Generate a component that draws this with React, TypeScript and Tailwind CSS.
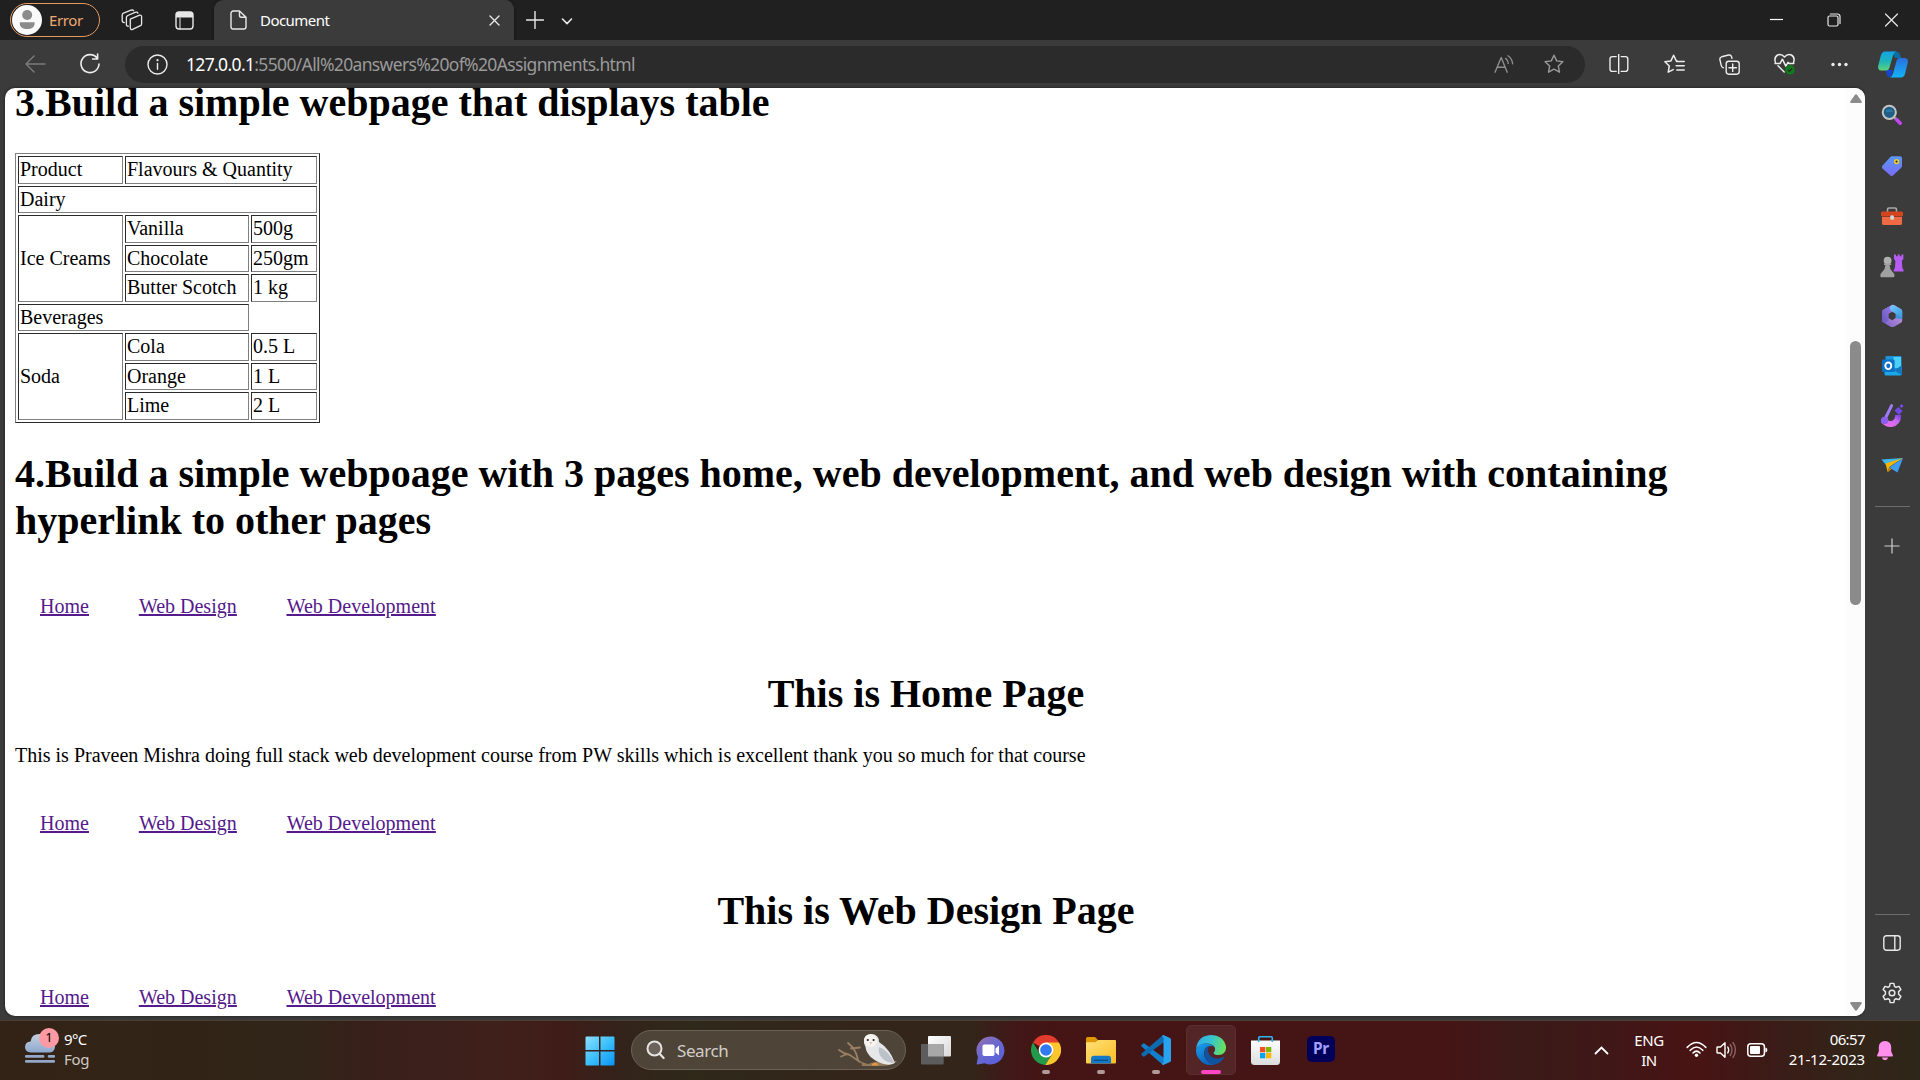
import React from "react";

type SvgProps = { w: number; h: number; vb?: string; className?: string; children: React.ReactNode };

function Svg({ w, h, vb, className = "", children }: SvgProps) {
  return (
    <svg
      width={w}
      height={h}
      viewBox={vb ?? `0 0 ${w} ${h}`}
      fill="none"
      stroke="none"
      className={`shrink-0 ${className}`}
    >
      {children}
    </svg>
  );
}

const line = { stroke: "currentColor", strokeWidth: 1.4, strokeLinecap: "round" as const, strokeLinejoin: "round" as const };

/* ---------- Tab strip ---------- */

function TabStrip() {
  return (
    <header className="flex h-10 shrink-0 bg-[#202020] text-[#e8e8e8]">
      <div className="ml-2.5 mt-[3px] flex h-[34px] w-[90px] items-center rounded-full border-[1.5px] border-[#e39a63]">
        <Svg w={30} h={30} className="ml-[1px]">
          <circle cx="15" cy="15" r="15" fill="#fafafa" />
          <circle cx="15.2" cy="10" r="5" fill="#8c8c8c" />
          <path d="M7.8 17.3h14.8v1.2c0 3.6-3 5.6-7.4 5.6s-7.4-2-7.4-5.6z" fill="#8c8c8c" />
        </Svg>
        <span className="ml-[7px] text-[15px] leading-5 tracking-[-0.4px] text-[#f0a873]">Error</span>
      </div>
      <Svg w={22} h={22} className="ml-[21px] mt-[9px]">
        <g {...line} strokeWidth={1.3}>
          <path d="M9.3 10.2 L18.6 6.2 Q20.6 5.8 20.6 7.8 V15 Q20.6 16.2 19.4 16.7 L11.6 20.4 Q9.6 21 9.3 19z" />
          <path d="M7.4 17.2 Q5.4 17.4 5.4 15.4 V8.6 Q5.4 7.2 6.8 6.5 L14 3.3 Q16.4 2.5 16.9 4.2" />
          <path d="M3.4 13.6 Q1.2 13.6 1.2 11.8 V6 Q1.2 4.7 2.5 4.1 L10 1.2 Q12 .6 12.6 1.7" />
        </g>
      </Svg>
      <Svg w={19} h={19} className="ml-[32px] mt-[11px]">
        <rect x="1" y="1" width="17" height="17" rx="3" {...line} />
        <path d="M1 6.400V4a3 3 0 0 1 3-3h11a3 3 0 0 1 3 3v2.400z" fill="currentColor" />
        <path d="M5 7v11" {...line} strokeWidth={1} />
      </Svg>
      <div className="ml-[20px] flex h-10 w-[300px] items-center rounded-t-[9px] bg-[#3b3b3b] shadow-[0_0_3px_#111]">
        <Svg w={17} h={20} className="ml-4">
          <path d="M1 3.2A2.2 2.2 0 0 1 3.2 1H9.5L16 7.2V16.8A2.2 2.2 0 0 1 13.8 19H3.2A2.2 2.2 0 0 1 1 16.8zM9.5 1V5.400Q9.500 7.200 11.300 7.200H16" {...line} />
        </Svg>
        <span className="ml-[13px] w-[229px] text-[15px] leading-5 tracking-[-0.55px] text-white">Document</span>
        <Svg w={11} h={11}>
          <path d="M1 1l9 9M10 1l-9 9" {...line} />
        </Svg>
      </div>
      <Svg w={18} h={18} className="ml-[12px] mt-[11px]">
        <path d="M9 .5v17M.5 9h17" {...line} />
      </Svg>
      <Svg w={12} h={7} className="ml-[17px] mt-[18px]">
        <path d="M1.5 1L6 5.6 10.5 1" {...line} strokeWidth={1.6} />
      </Svg>
      <div className="flex-1" />
      <div className="mr-[22px] mt-[12px] flex h-4 items-center">
        <Svg w={13} h={14}>
          <path d="M0 6.500h13" stroke="#fff" strokeWidth="1.2" />
        </Svg>
        <Svg w={14} h={14} className="ml-[44px]">
          <rect x="1" y="3" width="10" height="10" rx="1.5" {...line} strokeWidth={1.2} />
          <path d="M3.4 1H10.5A2.5 2.5 0 0 1 13 3.5V10.6" {...line} strokeWidth={1.2} />
        </Svg>
        <Svg w={13} h={14} className="ml-[44px]">
          <path d="M.5 1l12 12M12.5 1l-12 12" {...line} strokeWidth={1.2} />
        </Svg>
      </div>
    </header>
  );
}

/* ---------- Toolbar ---------- */

const STAR = "M10 1.2l2.7 5.7 6.2.8-4.6 4.3 1.2 6.2L10 15.2l-5.5 3 1.2-6.2L1.1 7.7l6.2-.8z";

function Toolbar() {
  return (
    <div className="flex h-12 shrink-0 items-center bg-[#3b3b3b] text-[#ededed]">
      <Svg w={21} h={18} className="ml-[25px] text-[#7c7c7c]">
        <path d="M9 1L1 9l8 8M1 9h19" {...line} />
      </Svg>
      <Svg w={22} h={22} className="ml-[33px]">
        <path d="M18.3 5.3A9 9 0 1 0 20 11M18.6 1v5h-5" {...line} strokeWidth={1.6} />
      </Svg>
      <div className="ml-6 flex h-[37px] w-[1460px] items-center rounded-full bg-[#2b2b2b]">
        <Svg w={21} h={21} className="ml-[22px]">
          <circle cx="10.5" cy="10.5" r="9.5" {...line} />
          <path d="M10.5 9.4v5.8" {...line} />
          <circle cx="10.5" cy="6.2" r="1.1" fill="currentColor" />
        </Svg>
        <div className="ml-[18px] text-[17.5px] leading-6 tracking-[-0.65px] text-[#9a9a9a]">
          <span className="text-white">127.0.0.1</span>:5500/All%20answers%20of%20Assignments.html
        </div>
        <div className="flex-1" />
        <Svg w={20} h={18} className="mr-[30px] text-[#8e8e8e]">
          <path d="M1 17.2L7.2 2.6 13.2 17.2M3.2 12.2h8" {...line} />
          <path d="M11.6 3.4Q14.2 5.4 14.3 8.4M14 .8Q18.3 4 18.6 8.8" {...line} />
        </Svg>
        <Svg w={20} h={20} className="mr-[21px] text-[#9a9a9a]">
          <path d={STAR} {...line} />
        </Svg>
      </div>
      <Svg w={20} h={20} className="ml-[24px]">
        <path d="M7.2 2.6H3.4Q1 2.6 1 5V15Q1 17.4 3.4 17.4H7.2M12.2 2.6H16.4Q18.8 2.6 18.8 5V15Q18.8 17.4 16.4 17.4H12.2M9.7 .5v19" {...line} />
      </Svg>
      <Svg w={21} h={20} className="ml-[35px]">
        <path d="M13.4 7.2L12.3 6.9 9.6 1.2 6.9 6.9.9 7.7 5.3 12 4.2 18.2 9.2 15.6M12.6 7.6h7.6M12.2 11.8h8M12.8 16h7.4" {...line} strokeWidth={1.5} />
      </Svg>
      <Svg w={21} h={21} className="ml-[34px]">
        <rect x="7.2" y="7.2" width="13" height="13" rx="2.6" {...line} />
        <path d="M13.7 10v7.4M10 13.7h7.4" {...line} />
        <path d="M4.4 13.8Q2.6 13.2 2.2 11.4L.9 5.6Q.6 3.4 2.7 2.8L9.6 1Q11.8.6 12.5 2.6L13 4.4" {...line} />
      </Svg>
      <Svg w={22} h={22} className="ml-[34px]">
        <path d="M1.4 9.4Q-.2 4.2 3.6 2 7.4.4 10.5 4 13.6.4 17.4 2 21.2 4.2 19.6 9.4M1 10.6h5l2.4-4.4 3.4 7 2.2-3.8 1.2 1.2h4.6M4 12.8l6.2 6.2" {...line} strokeWidth={1.5} />
        <circle cx="16" cy="16.8" r="4.8" fill="#0f7b1c" />
        <path d="M13.8 16.900l1.600 1.600 2.800-3" stroke="#2b2b2b" strokeWidth="1.2" />
      </Svg>
      <Svg w={17} h={5} className="ml-[35px]">
        <circle cx="2" cy="2.5" r="1.7" fill="currentColor" />
        <circle cx="8.5" cy="2.5" r="1.7" fill="currentColor" />
        <circle cx="15" cy="2.5" r="1.7" fill="currentColor" />
      </Svg>
      <Svg w={30} h={27} className="ml-[30px]">
        <defs>
          <linearGradient id="cpA" x1="0" y1="0" x2="0" y2="1">
            <stop offset="0" stopColor="#12a5ea" />
            <stop offset=".55" stopColor="#1fb5b5" />
            <stop offset="1" stopColor="#5fd47c" />
          </linearGradient>
          <linearGradient id="cpB" x1="0" y1="0" x2="0" y2="1">
            <stop offset="0" stopColor="#2a6fdc" />
            <stop offset="1" stopColor="#12b4f8" />
          </linearGradient>
        </defs>
        <path d="M14 .4h4.6Q21 .6 22 3.4L23.2 7H17z" fill="#0b6ea3" />
        <path d="M8 19h7l-2 6.4Q9.600 27 8.700 23.600z" fill="#1546cf" />
        <path d="M7 .4H18Q15.800 1.200 15 4.400L11.500 16.500Q10.700 19.400 8 19.400H3Q-.6 19 .3 14.500L3 4Q4 .8 7 .4z" fill="url(#cpA)" />
        <path d="M22 7h5.200Q30.600 7.600 29.700 12L27 23Q26 26.200 23 26.600H12Q14.200 25.800 15 22.600L18.500 10Q19.300 7 22 7z" fill="url(#cpB)" />
      </Svg>
    </div>
  );
}

/* ---------- Web page ---------- */

const cellBox = "border border-t-[#2b2b2b] border-l-[#2b2b2b] border-b-[#808080] border-r-[#808080] flex pl-px leading-[23px] whitespace-nowrap";
const cell = `${cellBox} items-start pt-px`;
const tallCell = `${cellBox} items-center row-span-3`;

function ProductTable() {
  return (
    <div className="mt-[27px] grid h-[270px] w-[305px] grid-cols-[105px_124px_66px] grid-rows-[28px_27px_28px_27px_28px_27px_28px_27px_28px] gap-[2px] border border-t-[#808080] border-l-[#808080] border-b-[#2b2b2b] border-r-[#2b2b2b] p-[2px] text-[20px]">
      <div className={cell}>Product</div>
      <div className={`${cell} col-span-2`}>Flavours &amp; Quantity</div>
      <div className={`${cell} col-span-3`}>Dairy</div>
      <div className={tallCell}>Ice Creams</div>
      <div className={cell}>Vanilla</div>
      <div className={cell}>500g</div>
      <div className={cell}>Chocolate</div>
      <div className={cell}>250gm</div>
      <div className={cell}>Butter Scotch</div>
      <div className={cell}>1 kg</div>
      <div className={`${cell} col-span-2`}>Beverages</div>
      <div />
      <div className={tallCell}>Soda</div>
      <div className={cell}>Cola</div>
      <div className={cell}>0.5 L</div>
      <div className={cell}>Orange</div>
      <div className={cell}>1 L</div>
      <div className={cell}>Lime</div>
      <div className={cell}>2 L</div>
    </div>
  );
}

function PageNav({ className }: { className: string }) {
  return (
    <nav className={`${className} flex gap-[50px] pl-[25px] text-[20px] leading-[23px] text-[#551a8b] underline`}>
      <a>Home</a>
      <a>Web Design</a>
      <a>Web Development</a>
    </nav>
  );
}

function WebPage() {
  return (
    <main className="ml-[5px] flex h-[928px] w-[1860px] overflow-hidden rounded-[10px] bg-white shadow-[0_0_3px_#1a1a1a]">
      <div className="h-full w-[1841px] px-[10px] font-['Liberation_Serif','Times_New_Roman',serif] text-black">
        <h1 className="mt-[-9px] text-[40px] font-bold leading-[47px]">3.Build a simple webpage that displays table</h1>
        <ProductTable />
        <h1 className="mt-[27px] text-[40px] font-bold leading-[47px]">
          4.Build a simple webpoage with 3 pages home, web development, and web design with containing hyperlink to other pages
        </h1>
        <PageNav className="mt-[51px]" />
        <h1 className="mt-[52px] pl-px text-center text-[40px] font-bold leading-[47px]">This is Home Page</h1>
        <p className="mt-[27px] text-[20px] leading-[23px]">
          This is Praveen Mishra doing full stack web development course from PW skills which is excellent thank you so much for that course
        </p>
        <PageNav className="mt-[45px]" />
        <h1 className="mt-[52px] pl-px text-center text-[40px] font-bold leading-[47px]">This is Web Design Page</h1>
        <PageNav className="mt-[52px]" />
      </div>
      <div className="flex w-[19px] flex-col items-center bg-[#fcfcfc]">
        <Svg w={12} h={9} className="mt-[6px]">
          <path d="M6 .2Q6.600.2 7.200 1L11.700 7.500Q12 9 10.800 9H1.200Q0 9 .3 7.500L4.800 1Q5.400.2 6 .2z" fill="#8b8b8b" />
        </Svg>
        <div className="mt-[238px] h-[264px] w-[11px] rounded-full bg-[#8b8b8b]" />
        <Svg w={12} h={9} className="mt-[397px]">
          <path d="M6 8.800Q6.600 8.800 7.200 8L11.700 1.500Q12 0 10.800 0H1.200Q0 0 .3 1.500L4.800 8Q5.400 8.800 6 8.800z" fill="#8b8b8b" />
        </Svg>
      </div>
    </main>
  );
}

/* ---------- Edge sidebar ---------- */

function Sidebar() {
  return (
    <aside className="flex w-[55px] flex-col items-center bg-[#3b3b3b] pr-[1px] text-[#e8e8e8]">
      <Svg w={22} h={22} className="mt-4">
        <path d="M13.500 13.500l2 2" stroke="#9a9a9a" strokeWidth="2.500" />
        <path d="M15.600 15.600l3.600 3.600" stroke="#c445f5" strokeWidth="3.600" strokeLinecap="round" />
        <circle cx="8.300" cy="8.300" r="6.600" fill="#1f5f86" stroke="#c4c4c4" strokeWidth="2" />
        <path d="M4.500 8a4 4 0 0 1 7.600 0z" fill="#2b7aa6" />
      </Svg>
      <Svg w={22} h={22} className="mt-[29px]">
        <defs>
          <linearGradient id="tag" x1="0" y1="0" x2="0" y2="1">
            <stop offset="0" stopColor="#5a97f7" />
            <stop offset="1" stopColor="#7a6bf5" />
          </linearGradient>
        </defs>
        <path d="M11 1.300H19Q21 1.300 21 3.300V11Q21 12 20.200 12.800L12 20.600Q10.700 21.600 9.400 20.600L1.400 13.400Q.4 12 1.400 10.800L9.400 2Q10 1.300 11 1.300z" fill="url(#tag)" />
        <circle cx="15.600" cy="6.600" r="1.900" fill="#3b3b3b" stroke="#f3cf20" strokeWidth="1.500" />
      </Svg>
      <Svg w={24} h={20} className="mt-[29px]">
        <path d="M7.500 6V3.600Q7.500 2 9 2H15Q16.500 2 16.500 3.600V6" stroke="#a9a9a9" strokeWidth="1.600" />
        <path d="M2 11h20v6.500a1.500 1.500 0 0 1-1.500 1.500h-17A1.500 1.500 0 0 1 2 17.500z" fill="#ee6a45" />
        <path d="M2.200 5.500h19.600Q23 5.500 23 7v2.500q0 1-1 1H2q-1 0-1-1V7q0-1.500 1.200-1.500z" fill="#d4451f" />
        <rect x="10.200" y="9.200" width="3.800" height="4.600" rx="1.500" fill="#d6d6d6" />
      </Svg>
      <Svg w={24} h={25} className="mt-[27px]">
        <path d="M14 1.500h2v1.700h1.700V1.500h2v1.700h1.700V1.500h2v4.500l-1.500 1.700.5 7.300q1.300 1 1.300 3.500H13.600q0-2.500 1.300-3.500l.5-7.300L14 6z" fill="#b65cf5" />
        <circle cx="7.600" cy="7.600" r="3.900" fill="#b0b0b0" />
        <path d="M4 10.500h7.200v1.600h-1.600q.2 4.400 2.600 6.400l2 2.200q.8 3.600-.6 3.600H1.200Q-.2 24.300.6 20.700l2-2.200q2.600-2 2.800-6.400H4z" fill="#a0a0a0" />
      </Svg>
      <Svg w={22} h={24} className="mt-[26px]">
        <defs>
          <linearGradient id="mA" x1="1" y1="0" x2="0" y2="1"><stop offset="0" stopColor="#9a7bea" /><stop offset="1" stopColor="#6657bd" /></linearGradient>
          <linearGradient id="mB" x1="0" y1="0" x2="1" y2="1"><stop offset="0" stopColor="#7fc6ff" /><stop offset="1" stopColor="#2e9fe0" /></linearGradient>
          <linearGradient id="mC" x1="0" y1="1" x2="1" y2="0"><stop offset="0" stopColor="#7560c8" /><stop offset="1" stopColor="#d5a0e2" /></linearGradient>
        </defs>
        <path d="M11 1Q12 .6 13.200 1.200L19.800 5Q21.200 5.900 21.200 7.500V16.500Q21.200 18 20 18.700L13 22.700Q11.200 23.400 9.600 22.700L2.400 18.600Q1 17.700 1 16V7.800Q1 6.600 2.300 5.800z" fill="url(#mC)" />
        <path d="M11 1L2.300 5.800Q1 6.600 1 7.800V16Q1 17.700 2.400 18.600 3.600 19.200 5 18.400L7.600 16.700V9.600L11.400 7.300z" fill="url(#mA)" />
        <path d="M10.500 1.200Q12 .5 13.200 1.200L19.800 5Q21.200 5.900 21.200 7.500V13.500L14.800 9.600 10 6.800 8.600 4z" fill="url(#mB)" />
        <path d="M14.600 9.500L21.200 13.500Q21.200 16 19 14.900L14.600 14z" fill="#3f94dc" />
        <path d="M7.600 9.800L11.200 7.800 14.600 9.800V14L11.200 16.200 7.600 14z" fill="#3b3b3b" />
      </Svg>
      <Svg w={22} h={22} className="mt-[27px]">
        <rect x="4.500" y="1" width="16" height="15" rx="1" fill="#1a94dd" />
        <path d="M12.500 2h7.500v11h-7.500z" fill="#4bd0f8" />
        <path d="M3.500 12.500L13 16.500 20.600 10.500V19a1.500 1.500 0 0 1-1.500 1.500H5a1.500 1.500 0 0 1-1.500-1.500z" fill="#1aa8ec" />
        <path d="M20.600 10.500v9.500L13 15.500z" fill="#1277bf" />
        <rect x="1" y="4.500" width="12.600" height="12.600" rx="1.300" fill="#0c70c4" />
        <ellipse cx="7.300" cy="10.800" rx="3" ry="3.300" stroke="#fff" strokeWidth="1.900" />
      </Svg>
      <Svg w={24} h={25} className="mt-[26px]">
        <defs><linearGradient id="ds" x1="0" y1="1" x2="1" y2="0"><stop offset="0" stopColor="#e86be8" /><stop offset=".6" stopColor="#c86af0" /><stop offset="1" stopColor="#7b44e8" /></linearGradient></defs>
        <path d="M3.600 17.500Q6.500 21.500 11.500 21 18 20 18.300 12" stroke="url(#ds)" strokeWidth="6" />
        <path d="M5.500 15L11.600 2.600" stroke="#a07af5" strokeWidth="3" strokeLinecap="round" />
        <circle cx="4.600" cy="17.400" r="3.700" fill="#8f5cf0" />
        <path d="M14.500 7.500l4-3.500 4 4-3.500 4z" fill="#7048e8" />
        <path d="M19.700 3.300l1.800-2.300 2 2-2 2z" fill="#7d4af0" />
      </Svg>
      <Svg w={23} h={18} className="mt-[28px]">
        <path d="M.5 3.600L22 2 10 8.500 5 9z" fill="#41b8ea" />
        <path d="M4.500 7.500L22 2 8.200 11 6.800 16.500z" fill="#f5b400" />
        <path d="M22 2L16.500 16.600 8 11.500z" fill="#3d9bf0" />
        <path d="M8 11.500l2.500 1.600-3.700 3.400z" fill="#c98500" />
      </Svg>
      <div className="mt-8 h-px w-[35px] bg-[#6d6d6d]" />
      <Svg w={16} h={16} className="mt-[31px]">
        <path d="M8 .5v15M.5 8h15" stroke="#cfcfcf" strokeWidth="1.200" />
      </Svg>
      <div className="flex-1" />
      <div className="h-px w-[35px] bg-[#6d6d6d]" />
      <Svg w={18} h={16} className="mt-[20px]">
        <rect x=".8" y=".8" width="16.400" height="14.400" rx="2.600" {...line} />
        <path d="M11.800 1v14" {...line} />
      </Svg>
      <Svg w={22} h={22} vb="0 0 24 24" className="mb-[16px] mt-[31px]">
        <path
          d="M10 1.500h4l.7 3.300 1.700 1 3.300-1 2 3.400-2.500 2.300v2.900l2.500 2.300-2 3.500-3.300-1-1.700 1-.7 3.300h-4l-.7-3.300-1.700-1-3.300 1-2-3.500 2.500-2.300v-2.900L2.300 8.200l2-3.400 3.300 1 1.700-1z"
          {...line}
          strokeWidth={1.6}
        />
        <circle cx="12" cy="12" r="3.100" {...line} strokeWidth={1.6} />
      </Svg>
    </aside>
  );
}

/* ---------- Taskbar ---------- */

function Weather() {
  return (
    <div className="relative ml-[25px] flex h-full w-[180px]">
      <Svg w={30} h={30} className="mt-[12px]">
        <defs>
          <linearGradient id="cl" x1="0" y1="0" x2="0" y2="1"><stop offset="0" stopColor="#c3cfe0" /><stop offset="1" stopColor="#8fa9cf" /></linearGradient>
        </defs>
        <path d="M6 19.600Q0 19.200 0 14 .3 8.800 5.600 8.400 6.500 1 14.500 1 22 1.200 23 8q7 .6 7 6-.3 5.300-6 5.600z" fill="url(#cl)" />
        <path d="M1.200 23.400h17M24 23.400h5M1.200 28.400h27.600" stroke="#93a8c8" strokeWidth="2.600" strokeLinecap="round" />
      </Svg>
      <div className="absolute left-[14px] top-[7px] flex h-5 w-5 items-center justify-center rounded-full bg-[#ff99a4] text-[13px] text-black">1</div>
      <div className="ml-[9px] pt-[8px] text-[15px] leading-[20px] tracking-[-0.6px] text-white">
        <div>9°C</div>
        <div className="tracking-[-0.3px] text-[#cfc9c4]">Fog</div>
      </div>
    </div>
  );
}

function Owl() {
  return (
    <Svg w={60} h={34}>
      <g strokeLinecap="round">
        <path d="M1 17Q6 21 12 22L22 29M10 10Q18 16 20 27M13 15.500L22 14.500M8 21.500L3 23.500" stroke="#9b7f64" strokeWidth="1.800" />
        <path d="M19 26Q24 30 30 31Q44 26 59 28 54 33 42 33H24Q24 29 19 26z" fill="#94785a" />
      </g>
      <path d="M26 10Q25 1.500 33 1q8 .3 8 8Q52 16 57 30q-6 3-13 .5Q29 25 27.500 14z" fill="#e6e7e8" />
      <path d="M41 14Q50 17 56 29.500q-5 1-10-2.500-7-6-5-13z" fill="#bcc2c8" />
      <ellipse cx="32.500" cy="7.500" rx="6.500" ry="6.300" fill="#f7f4ef" />
      <circle cx="29.800" cy="7" r="1.100" fill="#2b2420" />
      <circle cx="35.600" cy="7" r="1.100" fill="#2b2420" />
      <path d="M32.200 9l.6 3 .8-3z" fill="#c79a74" />
      <path d="M34 31q3-2.500 6 0v1.500h-6z" fill="#e2953a" />
    </Svg>
  );
}

function AppIcons() {
  return (
    <div className="flex h-full">
      <Svg w={30} h={30} className="mt-[15px]">
        <defs>
          <linearGradient id="win" x1="0" y1="0" x2="1" y2="1"><stop offset="0" stopColor="#8ee0ff" /><stop offset=".5" stopColor="#3cc0fb" /><stop offset="1" stopColor="#0a93f5" /></linearGradient>
        </defs>
        <path d="M1.500.5H14v13.600H.5V1.500a1 1 0 0 1 1-1zM15.500.5h13a1 1 0 0 1 1 1v12.600h-14zM.5 15.600H14v13.900H1.500a1 1 0 0 1-1-1zM15.500 15.600h14v12.900a1 1 0 0 1-1 1h-13z" fill="url(#win)" />
      </Svg>
      <div className="ml-4 mt-[9px] flex h-[40px] w-[275px] items-center rounded-full border border-[#6b6155] bg-[#4e4438]">
        <Svg w={19} h={20} className="ml-[14px]">
          <circle cx="8.500" cy="8.500" r="7" stroke="#e6e4e2" strokeWidth="2" fill="#6b6259" />
          <path d="M13.600 13.800l4 4.200" stroke="#e6e4e2" strokeWidth="2.200" strokeLinecap="round" />
        </Svg>
        <span className="ml-[12px] mt-px text-[17px] leading-5 tracking-[-0.4px] text-[#d2cdc8]">Search</span>
        <div className="ml-auto mr-[7px]"><Owl /></div>
      </div>
      <Svg w={30} h={29} className="ml-[15px] mt-[15px]">
        <defs><linearGradient id="tv" x1="0" y1="0" x2="1" y2="1"><stop offset="0" stopColor="#fff" /><stop offset="1" stopColor="#d8d8d8" /></linearGradient></defs>
        <rect x="7" y="0" width="23" height="20.500" rx="1" fill="url(#tv)" />
        <rect x="0" y="8" width="22.700" height="20.500" rx="1" fill="#5d5d5d" />
        <rect x="7" y="8" width="15.700" height="12.500" fill="#a8a8a8" />
      </Svg>
      <Svg w={29} h={29} className="ml-[25px] mt-[15px]">
        <defs><linearGradient id="ch" x1="0" y1="0" x2=".7" y2="1"><stop offset="0" stopColor="#9a6fa9" /><stop offset=".5" stopColor="#6a6ad0" /><stop offset="1" stopColor="#5a5fd8" /></linearGradient></defs>
        <path d="M14.500.5a14 14 0 1 1-6 26.700L1.500 28.400Q.3 28.400.8 27L2 21A14 14 0 0 1 14.500.5z" fill="url(#ch)" />
        <rect x="6.500" y="8.500" width="12" height="11.500" rx="1.800" fill="#fff" />
        <path d="M19.500 12.500l3.500-3v10l-3.500-3z" fill="#fff" />
      </Svg>
      <div className="ml-[26px] mt-[14px] flex w-[30px] flex-col items-center">
        <Svg w={30} h={30}>
          <path d="M15 15L2 7.500A15 15 0 0 1 28 7.500z" fill="#e33b2e" />
          <path d="M2 7.500A15 15 0 0 0 14.200 30L21.500 18.700 9 19z" fill="#229a4c" />
          <path d="M28 7.500H15L21.500 18.700 14.200 30A15 15 0 0 0 28 7.500z" fill="#fcc62c" />
          <circle cx="15" cy="15" r="7.400" fill="#fff" />
          <circle cx="15" cy="15" r="5.800" fill="#3079ee" />
        </Svg>
        <div className="mt-[5px] h-1 w-2 rounded-full bg-[#b39a9a]" />
      </div>
      <div className="ml-[25px] mt-[14px] flex w-[30px] flex-col items-center">
        <Svg w={30} h={30}>
          <defs><linearGradient id="fo" x1="0" y1="0" x2="1" y2="1"><stop offset="0" stopColor="#ffe17a" /><stop offset="1" stopColor="#f9bd22" /></linearGradient></defs>
          <path d="M0 3.500Q0 2 1.500 2H9l3.500 3.500V11H0z" fill="#dd9a06" />
          <path d="M0 7.300H9.500L12.500 5H29Q30 5 30 6V27.500Q30 28.500 29 28.500H1Q0 28.500 0 27.500z" fill="url(#fo)" />
          <path d="M5 28.500V24Q5 20.800 8 20.800H22Q25 20.800 25 24v4.500z" fill="#1679c8" />
          <path d="M8 25.300h14" stroke="#0a4f8f" strokeWidth="1.300" />
        </Svg>
        <div className="mt-[5px] h-1 w-2 rounded-full bg-[#b39a9a]" />
      </div>
      <div className="ml-[25px] mt-[14px] flex w-[30px] flex-col items-center">
        <Svg w={30} h={30}>
          <path d="M1.800 8.700L.5 10Q0 10.800.6 11.500L21.800 29.800 23.500 23.200 3.400 8.500Q2.500 8 1.800 8.700z" fill="#1080cc" />
          <path d="M1.800 21.300L.5 20Q0 19.200.6 18.500L21.800.2 23.500 6.800 3.400 21.500Q2.500 22 1.800 21.300z" fill="#0b6cb2" />
          <path d="M22.300 0Q21.600 0 21 .8L22.500 3V27L21 29.200Q21.600 30 22.300 30L29 27Q30 26.500 30 25.500V4.500Q30 3.500 29 3z" fill="#27a3f0" />
        </Svg>
        <div className="mt-[5px] h-1 w-2 rounded-full bg-[#b39a9a]" />
      </div>
      <div className="ml-[15px] mt-[4px] flex h-[50px] w-[50px] flex-col items-center rounded-[5px] border border-[#5e2d2e] bg-[#542526] pt-[9px]">
        <Svg w={30} h={30}>
          <defs>
            <linearGradient id="eA" x1="0" y1=".3" x2="1" y2=".5"><stop offset="0" stopColor="#2fa9e8" /><stop offset=".5" stopColor="#38c6cc" /><stop offset="1" stopColor="#6be15a" /></linearGradient>
            <linearGradient id="eB" x1="0" y1="0" x2=".5" y2="1"><stop offset="0" stopColor="#1aa0ea" /><stop offset="1" stopColor="#0b62bf" /></linearGradient>
          </defs>
          <path d="M.2 13.500Q1.500 1 14.500 0 27.500.2 30 11.500 30.500 19.500 22.500 20 18 20 17.500 18 19.500 16 19 13 17 8 9 8.500 3 9.500.2 13.500z" fill="url(#eA)" />
          <path d="M.1 14Q3 8.500 9.500 8.200 15 8.400 17.500 11.500 12 9.500 9 14 6 21 12 26.500 15 29.500 19 29.300 9.500 32 4 25 -.5 20.500.1 14z" fill="url(#eB)" />
          <path d="M10.500 11.800Q6.500 17 9.500 23.500 13 29.500 19 29.400 25 28 28.300 22.500 28.300 21.600 27 22.200 20 25 15 21.500 10.500 17.500 12.500 12z" fill="#1253a0" />
        </Svg>
        <div className="mt-[5px] h-1 w-5 shrink-0 rounded-full bg-[#ff45c4]" />
      </div>
      <Svg w={29} h={30} className="ml-[15px] mt-[14px]">
        <defs><linearGradient id="st" x1="0" y1="0" x2="0" y2="1"><stop offset="0" stopColor="#fff" /><stop offset="1" stopColor="#dcdcdc" /></linearGradient></defs>
        <path d="M0 5.500h29V26.500Q29 30 25.500 30h-22Q0 30 0 26.500z" fill="url(#st)" />
        <path d="M7.700 7V2.800Q7.700 1.800 8.700 1.800H20.300Q21.300 1.800 21.300 2.800V7" stroke="#2eb5f0" strokeWidth="1.600" />
        <path d="M9 12h5.300v5.300H9z" fill="#f25022" />
        <path d="M15 12h5.300v5.300H15z" fill="#7fba00" />
        <path d="M9 18h5.300v5.300H9z" fill="#00a4ef" />
        <path d="M15 18h5.300v5.300H15z" fill="#ffb900" />
      </Svg>
      <div className="ml-[27px] mt-[15px] flex h-[26px] w-7 items-center justify-center rounded-[5px] bg-[#00005b] pb-px text-[15.5px] font-bold leading-none tracking-[-0.4px] text-[#a3a0ff]">
        Pr
      </div>
    </div>
  );
}

function Tray() {
  return (
    <div className="ml-auto mr-[27px] flex h-full text-[15px] leading-5 text-white">
      <Svg w={15} h={9} className="mt-[25px]">
        <path d="M1.500 7.500L7.500 1.500 13.500 7.500" stroke="#fff" strokeWidth="1.800" strokeLinecap="round" />
      </Svg>
      <div className="ml-[20px] w-[40px] pt-[9px] text-center tracking-[-0.4px]">
        <div>ENG</div>
        <div>IN</div>
      </div>
      <Svg w={21} h={17} className="ml-[17px] mt-[20px]">
        <g stroke="#fff" strokeWidth="1.600" strokeLinecap="round">
          <path d="M1.200 6.400Q10.500-3.400 19.800 6.400M4.200 9.300Q10.500 2.600 16.800 9.300M7 12Q10.500 8.300 14 12" />
        </g>
        <circle cx="10.500" cy="14.300" r="1.700" fill="#fff" />
      </Svg>
      <Svg w={21} h={18} className="ml-[9px] mt-[20px]">
        <path d="M1 6.500Q1 6 1.500 6H4.500L9 1.800V16.200L4.500 12H1.500Q1 12 1 11.500z" stroke="#fff" strokeWidth="1.400" strokeLinejoin="round" />
        <path d="M11.800 6q1.800 3 0 6" stroke="#fff" strokeWidth="1.400" strokeLinecap="round" />
        <path d="M14.200 3.500q3.600 5.500 0 11M17 1.500q4.800 7.500 0 15" stroke="#8c6060" strokeWidth="1.400" strokeLinecap="round" />
      </Svg>
      <Svg w={21} h={14} className="ml-[10px] mt-[22px]">
        <rect x=".8" y=".8" width="16.600" height="12.400" rx="3" stroke="#fff" strokeWidth="1.500" />
        <rect x="3" y="3" width="10" height="8" rx="1" fill="#fff" />
        <path d="M18.400 4.500q2 .3 2 2.500t-2 2.500z" fill="#fff" />
      </Svg>
      <div className="w-[97px] pt-[8px] text-right tracking-[-0.2px]">
        <div className="tracking-[-0.6px]">06:57</div>
        <div>21-12-2023</div>
      </div>
      <Svg w={16} h={20} className="ml-[12px] mt-[20px]">
        <path d="M8 0Q14 .4 14.200 6V10.500L16 14.600Q16 15.600 15 15.600H1Q0 15.600 0 14.600L1.800 10.500V6Q2 .4 8 0z" fill="#ff8fec" />
        <path d="M4.800 16.600h6.400q-.8 2.600-3.200 2.600t-3.200-2.600z" fill="#ff8fec" />
      </Svg>
    </div>
  );
}

function Taskbar() {
  return (
    <footer className="flex h-[60px] shrink-0 border-t border-[#4a3f36] bg-[linear-gradient(90deg,#332316_0px,#302518_290px,#38201a_370px,#40201b_500px,#401c18_560px,#33231a_620px,#2f291a_690px,#33251a_850px,#33251a_970px,#421717_1015px,#451414_1060px,#451515_1450px,#3b1a18_1520px,#3e1818_1590px,#481313_1690px,#3a1c17_1780px,#332418_1850px,#2e2618_1920px)]">
      <Weather />
      <div className="ml-[380px]"><AppIcons /></div>
      <Tray />
    </footer>
  );
}

export default function App() {
  return (
    <div className="flex h-[1080px] w-[1920px] flex-col overflow-hidden bg-[#3b3b3b] font-['Noto_Sans','Open_Sans',sans-serif]">
      <TabStrip />
      <Toolbar />
      <div className="flex h-[932px] shrink-0">
        <WebPage />
        <Sidebar />
      </div>
      <Taskbar />
    </div>
  );
}
